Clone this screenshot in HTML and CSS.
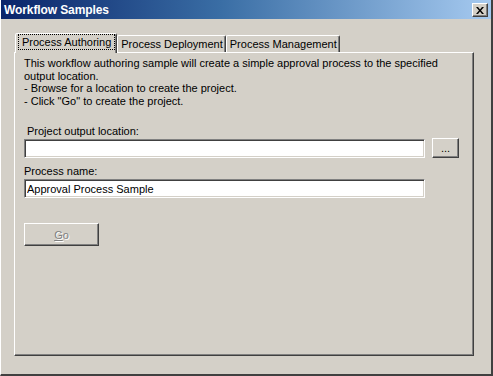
FILE: index.html
```html
<!DOCTYPE html>
<html lang="en">
<head>
    <meta charset="UTF-8">
    <title>Workflow Samples</title>
    <link rel="stylesheet" href="styles.css">
</head>
<body>
    <div class="window">
        <div class="titlebar">
            <span class="title">Workflow Samples</span>
            <button class="close-button">
                <svg width="8" height="7" viewBox="0 0 8 7">
                    <path d="M0 0h2l2 2.5 2-2.5h2l-3 3.5 3 3.5h-2l-2-2.5-2 2.5h-2l3-3.5z" fill="#000"/>
                </svg>
            </button>
        </div>

        <div class="dialog-body">
            <div class="tabs">
                <div class="tab active"><span class="focus">Process Authoring</span></div>
                <div class="tab">Process Deployment</div>
                <div class="tab">Process Management</div>
            </div>

            <div class="tab-panel">
                <p class="intro">
                    This workflow authoring sample will create a simple approval process to the specified output location.<br>
                    - Browse for a location to create the project.<br>
                    - Click "Go" to create the project.
                </p>

                <label class="field-label indent" for="outputPath">Project output location:</label>
                <div class="field-row">
                    <input type="text" id="outputPath" class="text-input">
                    <button class="button browse-button">...</button>
                </div>

                <label class="field-label" for="processName">Process name:</label>
                <div class="field-row">
                    <input type="text" id="processName" class="text-input" value="Approval Process Sample">
                </div>

                <button class="button go-button" disabled><u>G</u>o</button>
            </div>
        </div>
    </div>
</body>
</html>
```

FILE: styles.css
```css
body {
    margin: 0;
    padding: 0;
    background-color: #d4d0c8;
    font-family: 'Liberation Sans', Arial, sans-serif;
    font-size: 11px;
    color: #000;
}
.window {
    width: 493px;
    height: 376px;
    box-sizing: border-box;
    background-color: #d4d0c8;
    border-left: 1px solid #fff;
    border-bottom: 2px solid #404040;
    border-right: 2px solid #404040;
    display: flex;
    flex-direction: column;
}
.titlebar {
    height: 19px;
    display: flex;
    align-items: center;
    justify-content: space-between;
    padding: 0 3px 0 3px;
    background: linear-gradient(to right, #0a246a, #3a6ea5 45%, #a6caf0);
}
.title {
    color: #fff;
    font-weight: bold;
    font-size: 12px;
    letter-spacing: -0.1px;
}
.close-button {
    width: 16px;
    height: 14px;
    padding: 0;
    margin-top: 1px;
    background-color: #d4d0c8;
    border: 1px solid;
    border-color: #fff #404040 #404040 #fff;
    box-shadow: inset -1px -1px 0 #808080;
    display: flex;
    align-items: center;
    justify-content: center;
}
.dialog-body {
    padding: 14px 17px 0 13px;
}
.tabs {
    display: flex;
    align-items: flex-end;
    height: 19px;
    padding-left: 1px;
}
.tab {
    height: 17px;
    box-sizing: border-box;
    padding: 1px 2px 0 3px;
    border: 1px solid;
    border-bottom: none;
    border-color: #fff #404040 transparent #fff;
    border-radius: 2px 2px 0 0;
    box-shadow: inset -1px 0 0 #808080;
    white-space: nowrap;
    line-height: 15px;
    font-size: 11px;
}
.tab.active {
    height: 20px;
    padding: 1px 2px 0 3px;
    position: relative;
    z-index: 1;
    margin-bottom: -1px;
    background-color: #d4d0c8;
}
.focus {
    display: inline-block;
    outline: 1px dotted #000;
    padding: 0 3px;
    line-height: 14px;
}
.tab-panel {
    height: 304px;
    box-sizing: border-box;
    border: 1px solid;
    border-color: #fff #404040 #404040 #fff;
    box-shadow: inset -1px -1px 0 #808080;
    padding: 4px 8px 0 9px;
    display: flex;
    flex-direction: column;
    align-items: flex-start;
}
.intro {
    margin: 0;
    line-height: 12.5px;
    width: 432px;
}
.field-label {
    margin-top: 18px;
    line-height: 13px;
}
.field-label.indent {
    padding-left: 3px;
}
.field-row {
    display: flex;
    gap: 7px;
    margin-top: 1px;
}
.field-row + .field-label {
    margin-top: 7px;
}
.text-input {
    width: 401px;
    height: 19px;
    box-sizing: border-box;
    margin: 0;
    padding: 1px 2px;
    border: 1px solid;
    border-color: #808080 #fff #fff #808080;
    box-shadow: inset 1px 1px 0 #404040, inset -1px -1px 0 #d4d0c8;
    background-color: #fff;
    font-family: 'Liberation Sans', Arial, sans-serif;
    font-size: 11px;
    color: #000;
    outline: none;
}
.button {
    box-sizing: border-box;
    margin: 0;
    padding: 0;
    background-color: #d4d0c8;
    border: 1px solid;
    border-color: #fff #404040 #404040 #fff;
    box-shadow: inset -1px -1px 0 #808080;
    font-family: 'Liberation Sans', Arial, sans-serif;
    font-size: 11px;
    color: #000;
}
.browse-button {
    width: 27px;
    height: 20px;
    margin-top: -1px;
    line-height: 14px;
}
.go-button {
    width: 75px;
    height: 23px;
    margin-top: 25px;
    color: #808080;
    text-shadow: 1px 1px 0 #fff;
}
```
